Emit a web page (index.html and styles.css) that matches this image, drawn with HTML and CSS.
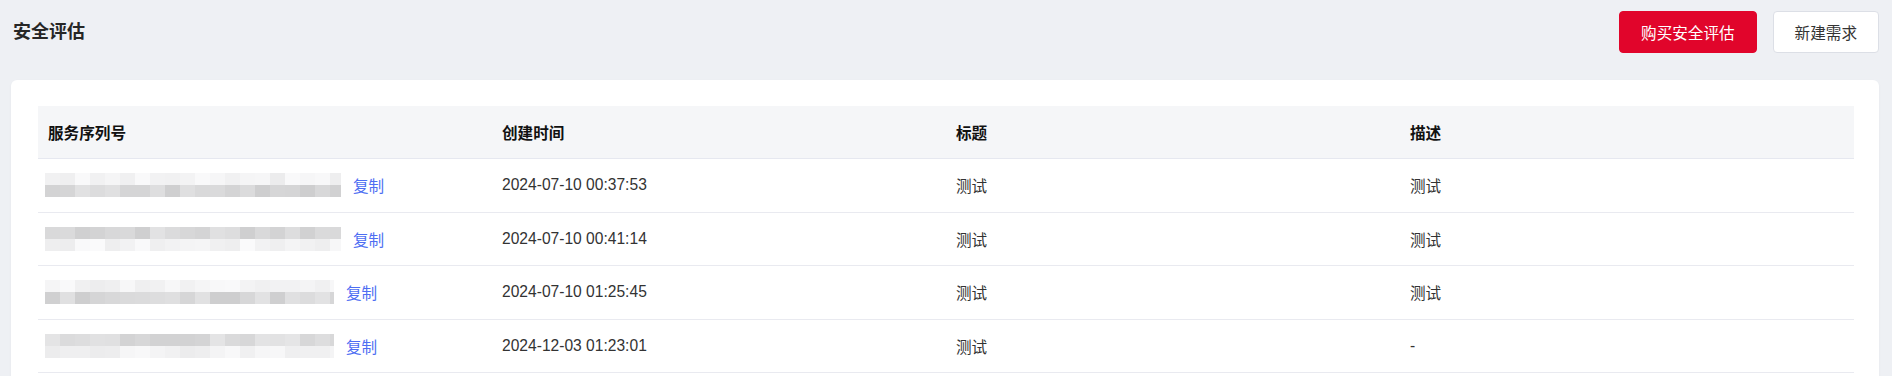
FILE: index.html
```html
<!DOCTYPE html>
<html lang="zh-CN">
<head>
  <meta charset="UTF-8">
  <meta name="viewport" content="width=device-width, initial-scale=1.0">
  <title>安全评估</title>
  <link rel="stylesheet" href="styles.css">
</head>
<body>
  <div class="page">
    <div class="page-head">
      <h1 class="page-title">安全评估</h1>
      <div class="actions">
        <button class="btn btn-primary">购买安全评估</button>
        <button class="btn">新建需求</button>
      </div>
    </div>

    <div class="card">
      <table class="list">
        <thead>
          <tr>
            <th>服务序列号</th>
            <th>创建时间</th>
            <th>标题</th>
            <th>描述</th>
          </tr>
        </thead>
        <tbody>
          <tr>
            <td><div class="sn"><span class="mosaic mosaic-long" data-dark="bottom" data-seed="3"></span><a class="copy">复制</a></div></td>
            <td>2024-07-10 00:37:53</td>
            <td>测试</td>
            <td>测试</td>
          </tr>
          <tr>
            <td><div class="sn"><span class="mosaic mosaic-long" data-dark="top" data-seed="7"></span><a class="copy">复制</a></div></td>
            <td>2024-07-10 00:41:14</td>
            <td>测试</td>
            <td>测试</td>
          </tr>
          <tr>
            <td><div class="sn"><span class="mosaic mosaic-short" data-dark="bottom" data-seed="11"></span><a class="copy">复制</a></div></td>
            <td>2024-07-10 01:25:45</td>
            <td>测试</td>
            <td>测试</td>
          </tr>
          <tr>
            <td><div class="sn"><span class="mosaic mosaic-short" data-dark="top" data-seed="19"></span><a class="copy">复制</a></div></td>
            <td>2024-12-03 01:23:01</td>
            <td>测试</td>
            <td>-</td>
          </tr>
        </tbody>
      </table>
    </div>
  </div>
  <script>
    // 打码的序列号：两行灰色马赛克
    var list = document.querySelectorAll('.mosaic')
    for (var i = 0; i < list.length; i++) {
      var el = list[i]
      var seed = parseInt(el.getAttribute('data-seed'), 10)
      var dark = el.getAttribute('data-dark')
      for (var r = 0; r < 2; r++) {
        for (var c = 0; c < 20; c++) {
          seed = (seed * 9301 + 49297) % 233280
          var rnd = seed / 233280
          var isDark = (r === 0 && dark === 'top') || (r === 1 && dark === 'bottom')
          var v = isDark ? Math.round(205 + rnd * 24) : Math.round(236 + rnd * 14)
          var cell = document.createElement('i')
          cell.style.background = 'rgb(' + v + ',' + v + ',' + (v + 1) + ')'
          el.appendChild(cell)
        }
      }
    }
  </script>
</body>
</html>
```

FILE: styles.css
```css
body{
  margin: 0;
  background-color: #eef0f4;
  font-family: "Liberation Sans", "Noto Sans CJK SC", sans-serif;
  font-size: 15.6px;
  color: #333;
}
.page{
  padding: 11px 13px 0 11px;
}
.page-head{
  display: flex;
  align-items: center;
  justify-content: space-between;
  height: 42px;
}
.page-title{
  margin: 0 0 4px 2px;
  font-size: 18px;
  font-weight: bold;
  color: #262626;
}
.actions{
  display: flex;
  gap: 16px;
}
.btn{
  height: 42px;
  padding: 0 21px;
  border: 1px solid #dcdfe6;
  border-radius: 4px;
  background-color: #fff;
  color: #333;
  font: inherit;
}
.btn-primary{
  background-color: #e1052b;
  border-color: #e1052b;
  color: #fff;
}
.card{
  margin-top: 27px;
  padding: 26px 25px 26px 27px;
  background-color: #fff;
  border-radius: 6px;
  box-shadow: 0 1px 3px rgba(0, 0, 0, .04);
}
.list{
  width: 100%;
  border-collapse: collapse;
  table-layout: fixed;
}
.list th{
  height: 52px;
  padding: 0 10px;
  text-align: left;
  font-weight: bold;
  color: #111;
  background-color: #f5f6f8;
  border-bottom: 1px solid #e6e8f0;
}
.list td{
  height: 52.5px;
  padding: 0 10px;
  border-bottom: 1px solid #e9eaf0;
  color: #333;
}
.sn{
  display: flex;
  align-items: center;
  margin-left: -3px;
}
.mosaic{
  display: grid;
  grid-template-columns: repeat(20, 15px);
  grid-auto-rows: 12px;
  overflow: hidden;
  margin-right: 12px;
}
.mosaic i{
  display: block;
}
.mosaic-long{
  width: 296px;
}
.mosaic-short{
  width: 289px;
}
.copy{
  color: #4e6ef2;
  cursor: pointer;
}
```
